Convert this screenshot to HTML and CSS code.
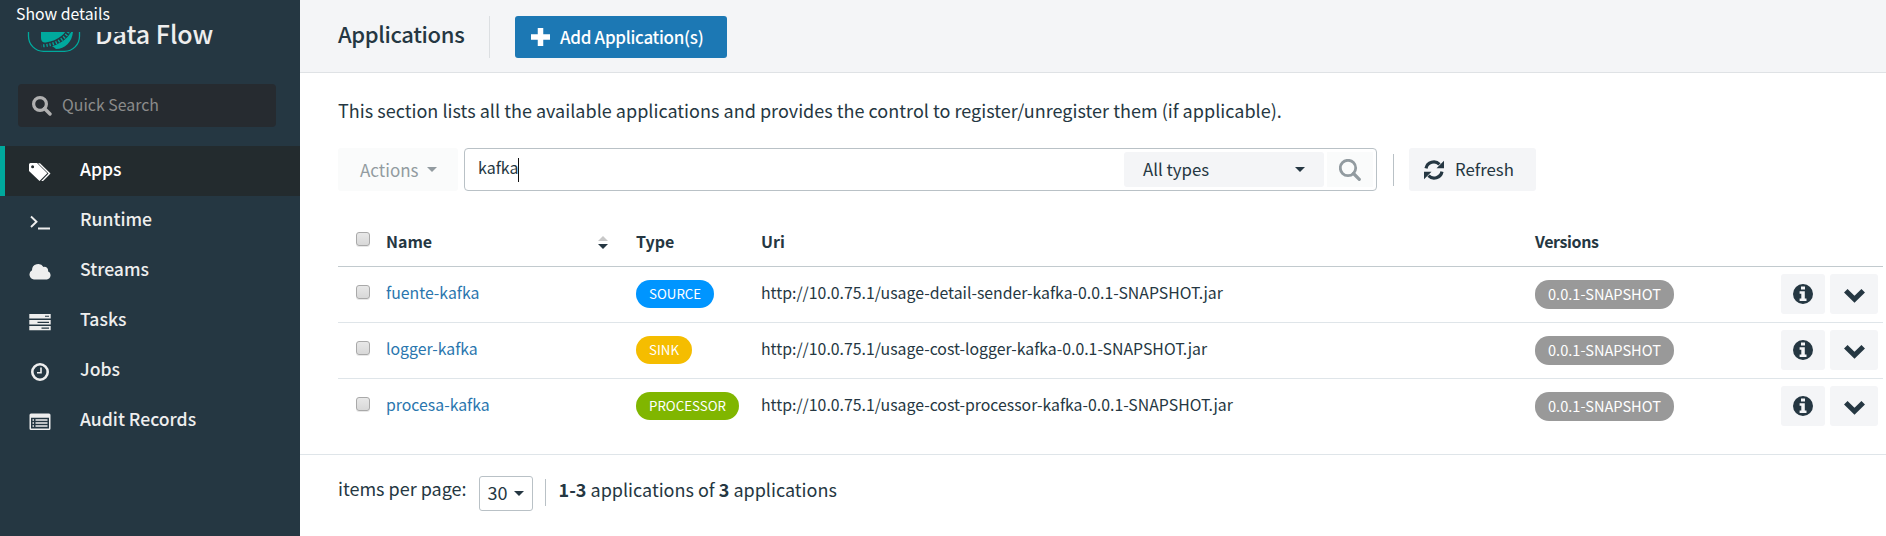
FILE: index.html
```html
<!DOCTYPE html>
<html lang="en">
<head>
<meta charset="utf-8">
<title>Data Flow</title>
<link rel="stylesheet" href="styles.css">
</head>
<body>
<svg class="defs" width="0" height="0">
  <symbol id="search" viewBox="0 0 20 20"><circle cx="8" cy="8" r="6.4" fill="none" stroke="currentColor" stroke-width="3.2"/><path d="M12.5 12.5 18 18" stroke="currentColor" stroke-width="3.4" stroke-linecap="round"/></symbol>
  <symbol id="info" viewBox="0 0 20 20"><path fill="currentColor" fill-rule="evenodd" d="M10 0a10 10 0 1 0 0 20a10 10 0 1 0 0-20zM8 2.6h4v3H8zM6.6 7.3h5.2v7.2h1.7v2.4H6.6v-2.4h1.7V9.7H6.6z"/></symbol>
  <symbol id="chevron" viewBox="0 0 20 14"><path d="M1.7 2.5 10 10.6 18.3 2.5" fill="none" stroke="currentColor" stroke-width="4.8"/></symbol>
</svg>
<div class="app">
  <nav class="sidebar">
    <div class="brand">
      <svg class="logo" width="54" height="34" viewBox="0 0 54 34"><rect x="1.500" y="-1" width="51" height="34.300" rx="15" fill="none" stroke="#00a99d" stroke-width="1.300"/><path d="M14 22V8H46V14C45 24 38 31 29 31Q26 28 18 25Q14 24 14 20z" fill="#00a99d"/><path d="M43.500 10Q36 26 14 27.500" fill="none" stroke="#253742" stroke-width="5"/><path d="M43 11Q36 26.500 14 28" fill="none" stroke="#00a99d" stroke-width="3" stroke-dasharray="1.300 1.900"/></svg>
      <span class="brand-name">Data Flow</span>
      <span class="status">Show details</span>
    </div>
    <div class="quick"><svg width="20" height="20"><use href="#search"/></svg><span>Quick Search</span></div>
    <ul class="menu">
      <li class="active"><svg width="22" height="18" viewBox="0 0 22 18"><path d="M9 .3h2L21.500 10.500 14 18H12.200L19.500 10.500z" fill="currentColor"/><path fill="currentColor" fill-rule="evenodd" d="M0 1.500Q0 0 1.500 0H8L18.300 10.200 10.500 18 0 8zM3.600 2.300a1.500 1.500 0 1 0 0 3a1.500 1.500 0 1 0 0-3z"/></svg><span>Apps</span></li>
      <li><svg width="22" height="18" viewBox="0 0 22 18"><path d="M2 3.500 7.500 8.700 2 14M9 15.500H21" fill="none" stroke="currentColor" stroke-width="1.900"/></svg><span>Runtime</span></li>
      <li><svg width="22" height="18" viewBox="0 0 22 18"><path d="M5 16.500a5 5 0 0 1-2-9.300A6.200 6.200 0 0 1 14.500 4a3.600 3.600 0 0 1 4.500 4.300A4.300 4.300 0 0 1 17.800 16.500z" fill="currentColor"/></svg><span>Streams</span></li>
      <li><svg width="22" height="18" viewBox="0 0 22 18"><path fill="currentColor" fill-rule="evenodd" d="M.3 1h21.400v4.600H.3zM16 2.800v1h4v-1zM.3 7h21.400v4.600H.3zM8.500 8.700v1.300H20V8.700zM.3 13h21.400v4.300H.3zM12.500 14.600v1.200H20v-1.200z"/></svg><span>Tasks</span></li>
      <li><svg width="22" height="18" viewBox="0 0 22 18"><circle cx="11" cy="9" r="7.700" fill="none" stroke="currentColor" stroke-width="2.600"/><path d="M12 4.500V9.800H8" fill="none" stroke="currentColor" stroke-width="1.600"/></svg><span>Jobs</span></li>
      <li><svg width="22" height="18" viewBox="0 0 22 18"><path fill="currentColor" fill-rule="evenodd" d="M2 .5h18q1.500 0 1.500 1.500V15.500q0 1.500-1.500 1.500H2Q.5 17 .5 15.500V2Q.5.5 2 .5zM2 4.800V15.500h18V4.800z"/><path d="M3.500 7H5M6.500 7H18.500M3.500 10H5M6.500 10H18.500M3.500 13H5M6.500 13H18.500" stroke="currentColor" stroke-width="1.500"/></svg><span>Audit Records</span></li>
    </ul>
  </nav>
  <main class="main">
    <header class="header">
      <h1>Applications</h1>
      <button class="add"><svg width="19" height="18" viewBox="0 0 19 18"><path d="M9.500 0V18M0 9H19" stroke="#fff" stroke-width="5.500"/></svg><span>Add Application(s)</span></button>
    </header>
    <section class="content">
      <p class="lead"><span>This section lists all the available applications and provides the control to register/unregister them (if applicable).</span></p>
      <div class="toolbar">
        <div class="actions"><span>Actions</span><i class="caret"></i></div>
        <div class="filter">
          <span class="query">kafka</span><i class="cursor"></i>
          <div class="types"><span>All types</span><i class="caret"></i></div>
          <div class="go"><svg width="22" height="22" viewBox="0 0 22 22"><circle cx="9" cy="9" r="7.700" fill="none" stroke="currentColor" stroke-width="2.800"/><path d="M14.500 14.500 20.300 20.300" stroke="currentColor" stroke-width="3.200" stroke-linecap="round"/></svg></div>
        </div>
        <i class="rule"></i>
        <div class="refresh"><svg width="20" height="20" viewBox="0 0 20 20"><path d="M2 8.300A8 8 0 0 1 15.500 4.300M18 11.700A8 8 0 0 1 4.500 15.700" fill="none" stroke="currentColor" stroke-width="3.200"/><path d="M20 .8V8.300H12.500zM0 19.200V11.700H7.500z" fill="currentColor"/></svg><span>Refresh</span></div>
      </div>
      <div class="table">
        <div class="row head"><i class="check"></i><b class="c-name">Name</b><svg class="sort" width="10" height="13" viewBox="0 0 10 13"><path d="M0 5 5 0 10 5z" fill="#c8c8c8"/><path d="M0 8 5 13 10 8z" fill="#253742"/></svg><b>Type</b><b class="c-uri">Uri</b><b class="c-ver">Versions</b></div>
        <div class="row"><i class="check"></i><a class="link">fuente-kafka</a><span class="badge source"><span>SOURCE</span></span><span class="uri">http://10.0.75.1/usage-detail-sender-kafka-0.0.1-SNAPSHOT.jar</span><span class="badge version"><span>0.0.1-SNAPSHOT</span></span><span class="btn"><svg width="20" height="20"><use href="#info"/></svg></span><span class="btn wide"><svg width="21" height="15"><use href="#chevron"/></svg></span></div>
        <div class="row"><i class="check"></i><a class="link">logger-kafka</a><span class="badge sink"><span>SINK</span></span><span class="uri">http://10.0.75.1/usage-cost-logger-kafka-0.0.1-SNAPSHOT.jar</span><span class="badge version"><span>0.0.1-SNAPSHOT</span></span><span class="btn"><svg width="20" height="20"><use href="#info"/></svg></span><span class="btn wide"><svg width="21" height="15"><use href="#chevron"/></svg></span></div>
        <div class="row"><i class="check"></i><a class="link">procesa-kafka</a><span class="badge processor"><span>PROCESSOR</span></span><span class="uri">http://10.0.75.1/usage-cost-processor-kafka-0.0.1-SNAPSHOT.jar</span><span class="badge version"><span>0.0.1-SNAPSHOT</span></span><span class="btn"><svg width="20" height="20"><use href="#info"/></svg></span><span class="btn wide"><svg width="21" height="15"><use href="#chevron"/></svg></span></div>
      </div>
    </section>
    <footer class="pager">
      <span class="per">items per page:</span>
      <div class="size"><span>30</span><i class="caret"></i></div>
      <i class="rule"></i>
      <span class="count"><b>1-3</b> applications of <b>3</b> applications</span>
    </footer>
  </main>
</div>
</body>
</html>
```
FILE: styles.css
```css
* { box-sizing: border-box; }
body { margin: 0; background: #fff; color: #253742; font-family: "Noto Sans CJK SC", "Open Sans", sans-serif; font-size: 17px; line-height: 24px; white-space: nowrap; }
svg { display: block; flex: none; }
.defs { position: absolute; }
.app { display: flex; height: 536px; overflow: hidden; }

.sidebar { width: 300px; flex: none; background: #253742; color: #eee; }
.brand { position: relative; height: 84px; padding: 18px 0 0 27px; display: flex; }
.brand-name { margin: 0 0 0 14px; font-size: 25px; line-height: 30px; font-weight: 500; }
.status { position: absolute; left: 0; top: 0; width: 124px; height: 32px; padding: 2px 0 0 16px; background: #253742; color: #fff; font-size: 15.8px; }
.quick { height: 43px; margin: 0 24px 18px 18px; padding: 0 14px; display: flex; align-items: center; gap: 10px; background: #262b30; border-radius: 4px; color: #8b8b8b; font-size: 15.9px; }
.quick span { padding-bottom: 1px; }
.quick svg { color: #b0b0b0; }
.menu { list-style: none; margin: 0; padding: 1px 0 0; }
.menu li { height: 50px; padding-left: 29px; display: flex; align-items: center; gap: 29px; font-size: 17.6px; font-weight: 500; }
.menu svg { margin-top: 2px; }
.menu span { padding-bottom: 4px; }
.menu .active { background: #232b2e; border-left: 5px solid #00a99d; padding-left: 24px; color: #fff; }

.main { flex: 1; min-width: 0; }
.header { height: 73px; padding: 16px 0 0 38px; display: flex; background: #f4f5f7; border-bottom: 1px solid #dfe2e5; }
h1 { margin: 0; width: 152px; height: 42px; border-right: 1px solid #dcdfe2; font-size: 22px; letter-spacing: -.35px; line-height: 35px; font-weight: 500; }
.add { width: 212px; height: 42px; margin-left: 25px; padding: 0 0 0 16px; display: flex; align-items: center; gap: 10px; border: 0; border-radius: 3px; background: #1c78b4; color: #fff; font: 500 17px/24px "Noto Sans CJK SC", sans-serif; letter-spacing: -.3px; }
.content { height: 382px; padding: 25px 3px 0 38px; border-bottom: 1px solid #dfe5e9; }
.lead { margin: 0 0 26px; font-size: 18px; letter-spacing: .02px; }
.toolbar { display: flex; align-items: center; height: 43px; }
.caret { width: 0; height: 0; border: 5px solid transparent; border-top-color: currentColor; border-bottom: 0; }
.actions { width: 120px; height: 43px; padding-left: 22px; display: flex; align-items: center; gap: 8px; background: #fafbfb; border-radius: 3px; color: #929ba0; }
.filter { width: 913px; height: 43px; margin-left: 6px; padding-left: 13px; display: flex; align-items: center; border: 1px solid #b9c1c6; border-radius: 4px; }
.query { font-size: 16px; padding-bottom: 5px; }
.cursor { width: 1px; height: 24px; margin-left: -1px; background: #111; }
.types { width: 200px; height: 35px; margin-left: auto; padding: 0 19px; display: flex; align-items: center; justify-content: space-between; background: #f4f5f7; border-radius: 3px; font-size: 16.8px; }
.types span, .refresh span { padding-bottom: 1px; }
.go { width: 46px; height: 35px; margin: 0 3px; display: flex; align-items: center; justify-content: center; background: #fafbfb; color: #929ba0; }
.rule { width: 1px; height: 32px; background: #b9c1c6; }
.toolbar .rule { margin: 0 15px 0 16px; }
.refresh { width: 127px; height: 43px; padding-left: 15px; display: flex; align-items: center; gap: 11px; background: #f4f5f7; border-radius: 3px; font-size: 16.8px; }

.table { margin-top: 20px; font-size: 15.84px; }
.row { display: grid; grid-template-columns: 48px 250px 125px 774px 246px 49px 48px; align-items: center; height: 56px; padding-bottom: 1px; border-bottom: 1px solid #dfe5e9; }
.row:last-child { border-color: transparent; }
.head { grid-template-columns: 48px 212px 38px 125px 774px 246px; padding: 5px 0 0; border-color: #c2cace; font-size: 16px; }
.check { width: 14px; height: 14px; margin: 0 0 5px 18px; border: 1px solid #a9a9a9; border-radius: 3px; background: linear-gradient(#e8e8e8, #d8d8d8); box-shadow: 0 1px 0 #e8e8e8; }
.sort { margin-top: 2px; }
.c-ver { letter-spacing: -.4px; }
.link { color: #2a76ae; }
.link, .uri { padding-bottom: 2px; }
.badge { justify-self: start; height: 28px; padding: 0 13px; border-radius: 14px; color: #fff; font-size: 13.3px; line-height: 27px; }
.source { background: #0095ff; }
.sink { background: #f5bd00; }
.processor { background: #80b600; }
.version { height: 29px; margin-top: 1px; background: #999; font-size: 14.6px; }
.btn { width: 44px; height: 40px; display: flex; align-items: center; justify-content: center; background: #f4f5f7; border-radius: 3px; }
.wide { width: 48px; padding-top: 2px; }

.pager { display: flex; padding: 21px 0 0 38px; font-size: 18px; }
.size { width: 54px; height: 35px; margin: 0 12px 0 12px; padding-left: 8px; display: flex; align-items: center; gap: 6px; border: 1px solid #b9c1c6; border-radius: 3px; }
.size span { padding-bottom: 4px; }
.pager .rule { height: 27px; margin: 3px 13px 0 0; }
.count { padding-top: 1px; }
```
